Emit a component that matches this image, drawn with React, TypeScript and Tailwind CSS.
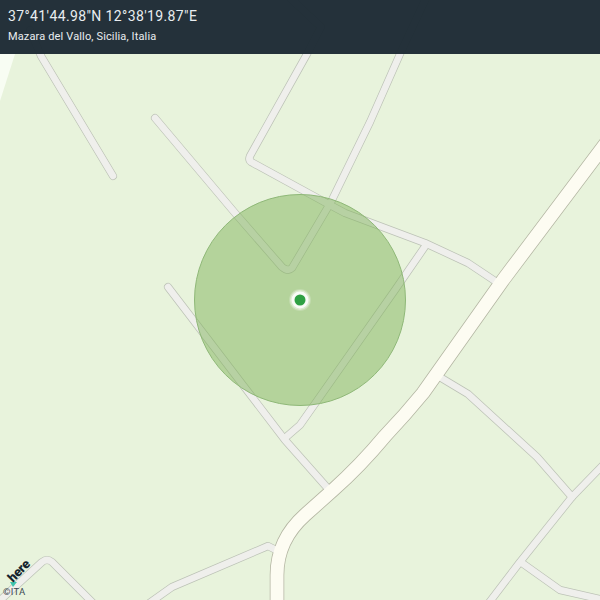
const minorRoads = [
  'M30 30L41 56L113 176',
  'M155 118L235 213L282 267Q288 272 292 268L331 202L370 122L400 54L427 -4',
  'M288 -4L321 27L307 54L250 156Q248 161 253 163L330 205L345 213L425 243L468 263L498 283',
  'M426 245L395 290L300 425L285 438',
  'M168 287L285 440L331 492',
  'M438 376L468 394L537 457L572 497L604 464',
  'M572 497L520 562L488 604',
  'M522 563L560 590L604 600',
  'M148 604L172 587L268 546L280 552',
  'M-4 604L42 562Q47 558 52 562L94 604',
]

const mainRoad = 'M606 143L503 280L423 393Q405 415 385 436Q360 466 333 490L305 515Q277 540 277 575L277 604'

const MapLayer = () => (
  <svg className="absolute inset-0" width="600" height="600" viewBox="0 0 600 600">
    <rect width="600" height="600" fill="#e8f3dc" />
    <path d="M0 54L15 54L0 101Z" fill="#f8fdf3" />
    <g fill="none" strokeLinecap="round" strokeLinejoin="round">
      {minorRoads.map((d) => (
        <path key={d} d={d} stroke="#bcc2b6" strokeWidth="8" />
      ))}
      <path d={mainRoad} stroke="#b3b5a2" strokeWidth="14.5" strokeLinecap="butt" />
      {minorRoads.map((d) => (
        <path key={`fill-${d}`} d={d} stroke="#efefec" strokeWidth="6.6" />
      ))}
      <path d={mainRoad} stroke="#fdfcf2" strokeWidth="13" strokeLinecap="butt" />
    </g>
    <circle cx="300" cy="300" r="105.5" fill="#7fb45a" fillOpacity="0.5" stroke="#8fb878" strokeWidth="1" />
    <circle cx="300" cy="300" r="11" fill="#fff" fillOpacity="0.2" />
    <circle cx="300" cy="300" r="10" fill="#fff" fillOpacity="0.4" />
    <circle cx="300" cy="300" r="8.5" fill="#fff" fillOpacity="0.8" />
    <circle cx="300" cy="300" r="5.5" fill="#2ea043" />
    <path d="M10 582L17 582L13 587Z" fill="#3fc4ad" />
  </svg>
)

export default function App() {
  return (
    <div className="relative h-[600px] w-[600px] overflow-hidden font-['Roboto',sans-serif]">
      <MapLayer />
      <header className="relative flex h-[54px] flex-col bg-[#202d36]/[0.98] px-2 pt-[6px] text-[#e9edf0]">
        <div className="mt-[1px] text-[14px] leading-[18px] tracking-[0.38px]">37°41'44.98"N 12°38'19.87"E</div>
        <div className="mt-[4px] text-[11px] leading-[16px] tracking-[0.14px]">Mazara del Vallo, Sicilia, Italia</div>
      </header>
      <span className="absolute left-[15px] top-[571px] origin-bottom-left -rotate-45 text-[13px] leading-[14px] font-black tracking-[-0.2px] text-[#16242d]">
        here
      </span>
      <span className="absolute bottom-[3px] left-[3px] text-[9.5px] leading-[10px] tracking-[0.3px] text-[#3c4a52]">©ITA</span>
    </div>
  )
}
